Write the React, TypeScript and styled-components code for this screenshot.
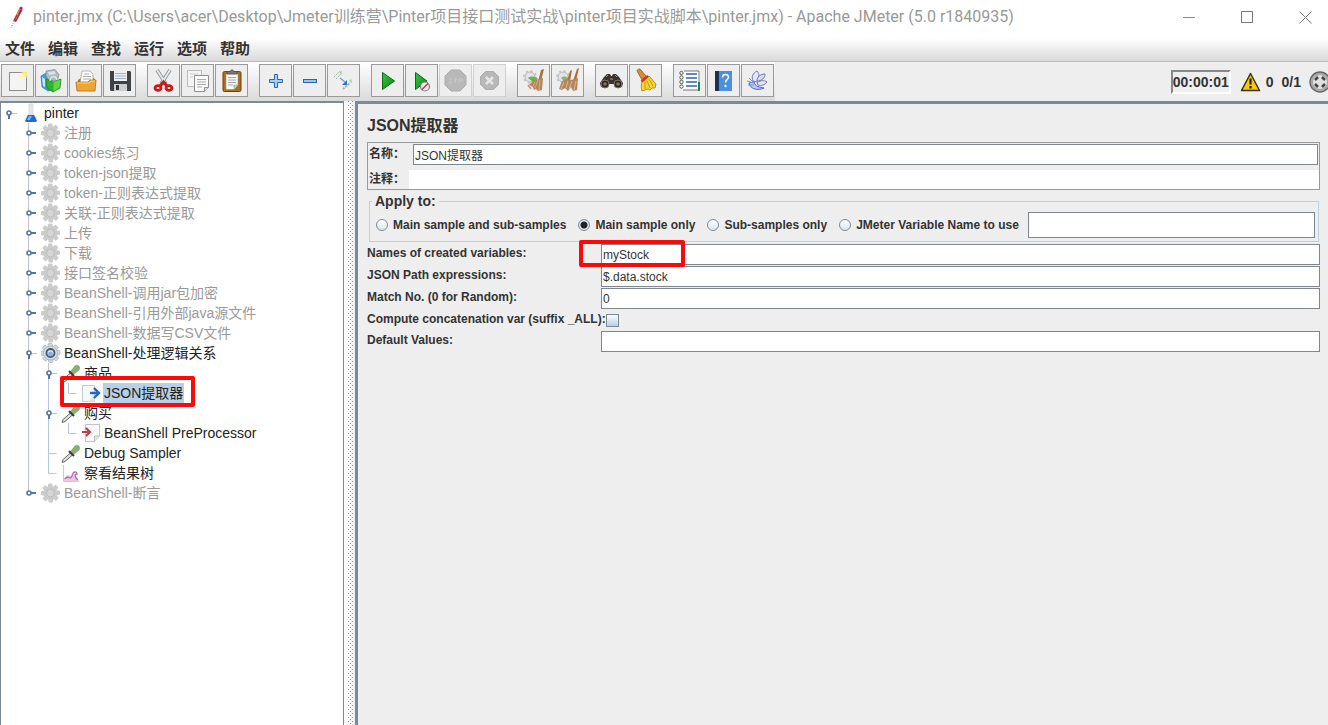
import React from "react";
import styled, { createGlobalStyle, css } from "styled-components";

const sans = `"Liberation Sans", Arial, "Noto Sans CJK SC", sans-serif`;

const GlobalStyle = createGlobalStyle`
  * { box-sizing: border-box; }
  body { margin: 0; background: #eeeeee; color: #333333; font-family: ${sans}; font-size: 12px; }
  button, input { font-family: inherit; font-size: inherit; color: inherit; margin: 0; }
`;

const Window = styled.div`
  display: flex;
  flex-direction: column;
  min-height: 100vh;
  overflow: hidden;
`;

/* ---------- title bar ---------- */

const TitleBar = styled.header`
  display: flex;
  align-items: center;
  height: 38px;
  padding: 0 3px 4px 8px;
  background: #ffffff;
`;

const Title = styled.h1`
  flex: 1;
  min-width: 0;
  margin: 0 0 0 7px;
  overflow: hidden;
  white-space: nowrap;
  font-family: Roboto, "Noto Sans CJK SC", sans-serif;
  font-size: 16px;
  line-height: 24px;
  font-weight: 400;
  color: #999999;
`;

const WindowButton = styled.button`
  display: flex;
  align-items: center;
  justify-content: center;
  width: 40px;
  height: 34px;
  margin-left: 18px;
  padding: 0;
  border: 0;
  background: none;
`;

/* ---------- menu ---------- */

const MenuBar = styled.nav`
  display: flex;
  gap: 13px;
  height: 24px;
  padding: 0 5px 2px;
  border-bottom: 1px solid #bbbbbb;
  background: linear-gradient(#ffffff, #dadada);
`;

const MenuItem = styled.button`
  padding: 0;
  border: 0;
  background: none;
  font-size: 15px;
  line-height: 20px;
  font-weight: 700;
`;

/* ---------- toolbar ---------- */

const ToolRow = styled.div`
  display: flex;
  align-items: stretch;
  justify-content: space-between;
  height: 39px;
  overflow: hidden;
`;

const ToolBar = styled.div`
  display: flex;
  gap: 11px;
  padding: 2px 1px 4px;
  background: linear-gradient(#ffffff, #dadada);
`;

const ToolGroup = styled.div`
  display: flex;
  gap: 1px;
`;

const ToolButton = styled.button`
  display: flex;
  align-items: center;
  justify-content: center;
  width: 33px;
  height: 33px;
  padding: 0;
  border: 1px solid #999999;
  background: #eeeeee;
  &:disabled { border-color: #d0d0d0; }
`;

const Status = styled.div`
  display: flex;
  align-items: center;
  margin-right: -3px;
  font-size: 14px;
  font-weight: 700;
`;

const Timer = styled.output`
  height: 24px;
  margin-right: 9px;
  border: 2px solid;
  border-color: #888888 #ffffff #ffffff #888888;
  line-height: 21px;
`;

const Count = styled.span`
  margin: 0 8px 0 5px;
  & + & { margin-left: 0; }
`;

/* ---------- main split ---------- */

const Split = styled.main`
  display: flex;
  flex: 1;
`;

const TreePane = styled.section`
  flex: 0 0 344px;
  border: 1px solid #7a8a99;
  border-top-width: 2px;
  border-bottom: 0;
  background: #ffffff;
`;

const Divider = styled.div`
  display: flex;
  flex: 0 0 11px;
  justify-content: flex-end;
  padding-right: 2px;
  background: linear-gradient(90deg, #ffffff, #eeeeee);
`;

const Grip = styled.div`
  width: 5px;
  background:
    linear-gradient(#888888, #888888) 0 0 / 1px 1px,
    conic-gradient(from 0deg at 1px 1px, transparent 270deg, #9a9a9a 270deg) 0 0 / 4px 4px,
    conic-gradient(from 0deg at 1px 1px, transparent 270deg, #9a9a9a 270deg) 2px 2px / 4px 4px;
  background-repeat: no-repeat, repeat, repeat;
`;

const Tree = styled.ul`
  margin: 0;
  padding: 0;
  list-style: none;
`;

const TreeItem = styled.li`
  position: relative;
  display: flex;
  align-items: center;
  height: 20px;
  font-size: 14px;
  line-height: 20px;
  white-space: nowrap;
`;

const Cell = styled.svg`
  flex: 0 0 20px;
  width: 20px;
  height: 20px;
`;

const Label = styled.span<{ $tone?: "off" | "on" | "selected" }>`
  margin-left: 2px;
  padding: 0 1px;
  color: ${(p) => (p.$tone === "off" ? "#999999" : "#222222")};
  ${(p) =>
    p.$tone === "selected" &&
    css`
      background: #b8cfe5;
    `}
`;

const markFrame = css`
  position: absolute;
  z-index: 1;
  border: 4px solid #fb0a0a;
  border-radius: 2px;
  pointer-events: none;
`;

const TreeMark = styled.span`
  ${markFrame}
  left: 59px;
  top: -7px;
  width: 135px;
  height: 31px;
`;

const FieldMark = styled.span`
  ${markFrame}
  left: -22px;
  top: -4px;
  width: 106px;
  height: 27px;
`;

/* ---------- editor ---------- */

const Editor = styled.section`
  flex: 1;
  min-width: 0;
  padding: 11px 8px 10px 9px;
  border-top: 3px solid #7a8a99;
  border-left: 3px solid #7a8a99;
  font-weight: 700;
`;

const EditorTitle = styled.h2`
  margin: 0 0 5px;
  font-size: 16px;
  line-height: 22px;
  font-weight: 700;
`;

const NamePanel = styled.div`
  border: 1px solid #999999;
`;

const NameRow = styled.div`
  display: flex;
  align-items: center;
  gap: 4px;
  padding: 1px;
  & + & { gap: 0; padding: 4px 0 0 1px; }
`;

const NameLabel = styled.label`
  flex: 0 0 40px;
  white-space: nowrap;
  line-height: 19px;
`;

const TextField = styled.input<{ $plain?: boolean; $tall?: boolean }>`
  display: block;
  flex: 1;
  width: 100%;
  min-width: 0;
  height: ${(p) => (p.$tall ? 26 : p.$plain ? 19 : 21)}px;
  padding: 0 1px;
  border: ${(p) => (p.$plain ? "0" : "1px solid #7f868d")};
  border-radius: 0;
  outline: 0;
  background: #ffffff;
  font-weight: 400;
`;

const Scope = styled.fieldset`
  min-width: 0;
  margin: 3px 1px 0 2px;
  padding: 3px 3px 3px 6px;
  border: 1px solid #b8cfe5;
`;

const ScopeLegend = styled.legend`
  margin-left: -4px;
  padding: 0 3px;
  font-size: 14px;
  line-height: 16px;
`;

const ScopeRow = styled.div`
  display: flex;
  align-items: center;
  gap: 12px;
`;

const Choice = styled.label`
  display: flex;
  align-items: center;
  gap: 5px;
  white-space: nowrap;
`;

const Radio = styled.input`
  appearance: none;
  width: 12px;
  height: 12px;
  border: 1px solid #7a8a99;
  border-radius: 50%;
  background: linear-gradient(#ffffff, #dbe6f1);
  &:checked { background: radial-gradient(circle, #222222 3px, #e4ecf4 4px); }
`;

const ScopeName = styled.div`
  display: flex;
  flex: 1;
  margin-left: -3px;
`;

const Fields = styled.div`
  display: grid;
  grid-template-columns: 234px 1fr;
  row-gap: 1px;
  margin-top: 2px;
`;

const FieldLabel = styled.label`
  white-space: nowrap;
  line-height: 18px;
`;

const FieldBox = styled.div`
  position: relative;
  min-height: 20px;
`;

const CheckBox = styled.input`
  display: block;
  appearance: none;
  width: 13px;
  height: 13px;
  margin: 4px 0 3px 5px;
  border: 1px solid #7a8a99;
  background: linear-gradient(#ffffff, #b8cfe5);
`;

/* ---------- toolbar drawings ---------- */

const art: Record<string, React.ReactNode> = {
  new: (
    <>
      <rect x="4.5" y="4.5" width="17" height="18" fill="#f4f4f2" stroke="#8c8c8c" />
      <circle cx="18" cy="8" r="4" fill="#fff9a0" opacity=".5" />
      <circle cx="20" cy="6" r="2.500" fill="#fff36a" opacity=".9" />
    </>
  ),
  templates: (
    <>
      <path d="M2 8l5-3 6 2v15l-4 1-6-4z" fill="#3c9fd6" stroke="#1c6fa3" strokeWidth=".6" />
      <path d="M7 3 16 1.500l4 5-2 7-9-2-2-4z" fill="#aebbc4" stroke="#7c8a92" strokeWidth=".7" />
      <path d="M9 4l6-1 2 3-7 1z" fill="#dbe3e8" />
      <path d="M3 9l3 2v8l-2-1z" fill="#c9ebfb" />
      <path d="M7 11l7 3 8-3-1 9-7 4-6-4z" fill="#2fb52c" stroke="#147c18" strokeWidth=".7" />
      <path d="M14.500 14l7-2.500-1 8-6 3.500z" fill="#5fd846" />
      <path d="M11 13c0-5 6-6 7-1" fill="none" stroke="#dff5df" strokeWidth="1.200" />
    </>
  ),
  open: (
    <>
      <path d="M5 12l3-2h13l1 2v10H5z" fill="#b8740f" />
      <path d="M9 3h8l3 3v9H7z" fill="#fff" stroke="#999" strokeWidth=".7" />
      <path d="M11 6h5M10 8.500h8M10 11h8" stroke="#aaa" />
      <path d="M3 14h12l2-2h6l-1 11H4z" fill="#eda636" stroke="#b06d0c" strokeWidth=".8" />
      <path d="M4 15h12l2-2h4" stroke="#ffd27c" />
    </>
  ),
  save: (
    <>
      <path d="M3 3h20l1 1v19H4l-1-1z" fill="#3f4245" />
      <rect x="7" y="3" width="13" height="10" fill="#eef1f3" />
      <path d="M8 5.500h11M8 8h11M8 10.500h11" stroke="#9db3c4" />
      <rect x="7" y="16" width="13" height="7" fill="#c9cdd0" />
      <rect x="9" y="17" width="3" height="5" fill="#333" />
    </>
  ),
  cut: (
    <>
      <path d="M6 2 15 16M19 2 10 16" stroke="#8a8f93" strokeWidth="3.600" />
      <path d="M6 2 15 16M19 2 10 16" stroke="#e5e8ea" strokeWidth="2" />
      <ellipse cx="7" cy="20" rx="3" ry="2.400" fill="none" stroke="#d01717" strokeWidth="2.800" />
      <ellipse cx="18" cy="20" rx="3" ry="2.400" fill="none" stroke="#d01717" strokeWidth="2.800" />
      <path d="M9 18l3.500-4 3.500 4" stroke="#d01717" strokeWidth="3" fill="none" />
    </>
  ),
  copy: (
    <>
      <path d="M2.500 2.500h14v16h-14z" fill="#f4f4f4" stroke="#bbb" />
      <path d="M5 6h8M5 9h3" stroke="#ccc" />
      <path d="M9.500 7.500h14v12l-4 4h-10z" fill="#fafafa" stroke="#8d8d8d" />
      <path d="M12 11.500h9M12 14h9M12 16.500h9M12 19h5" stroke="#a9a9a9" />
      <path d="M19.500 23.500v-4h4" fill="#ddd" stroke="#8d8d8d" />
    </>
  ),
  paste: (
    <>
      <rect x="4" y="3.500" width="18" height="20" rx="1.500" fill="#a8701d" stroke="#6b4510" />
      <path d="M7 6h12v11l-4 4.500H7z" fill="#fbfbf8" stroke="#8d8d8d" strokeWidth=".6" />
      <path d="M9 9.500h8M9 12h8M9 14.500h8M9 17h5" stroke="#a3a3a3" />
      <path d="M15 21v-4h4" fill="#ccc" stroke="#999" strokeWidth=".6" />
      <path d="M8 6V3.500h3L12 2h2l1 1.500h3V6z" fill="#777b72" stroke="#4c4f48" strokeWidth=".7" />
    </>
  ),
  plus: <path d="M11.500 6.500h3v5h5v3h-5v5h-3v-5h-5v-3h5z" fill="#a9cdf3" stroke="#2d66a8" />,
  minus: <rect x="6.500" y="11.500" width="13" height="3" fill="#9cc4ef" stroke="#2d66a8" />,
  toggle: (
    <>
      <path d="M3 9l6-6M5 11l6-6" stroke="#9fb0a4" strokeDasharray="2 1" />
      <path d="M8 4l3-1-1 3z" fill="#9ccf90" />
      <path d="M12 21l7-6" stroke="#9fb0a4" strokeWidth="2" strokeDasharray="2 1" />
      <path d="M18 13l3 2-1-4z" fill="#9ccf90" />
      <path d="M9 10l5 4" stroke="#6b9be0" strokeWidth="1.300" />
      <path d="M16 17v-5l-5 5z" fill="#2e74d4" />
    </>
  ),
  start: <path d="M7.500 4.500 19.500 13 7.500 21.500z" fill="url(#play)" stroke="#0b6b13" />,
  startNoPause: (
    <>
      <path d="M6.500 4.500 18 13 6.500 21.500z" fill="url(#play)" stroke="#0b6b13" />
      <circle cx="16" cy="18.500" r="4.500" fill="#e7ecf2" stroke="#77808a" strokeWidth="1.200" />
      <path d="M13 21.500l6-6" stroke="#e03434" strokeWidth="1.600" />
    </>
  ),
  stop: (
    <>
      <path d="M8 2h9l6 6v9l-6 6H8l-6-6V8z" fill="#b8b8b8" stroke="#adadad" />
      <path d="M6 11h3l-3 4h3M11 11h3M12.500 11v4M16 15v-4h3v2h-3" stroke="#cacaca" fill="none" />
    </>
  ),
  shutdown: (
    <>
      <path d="M8.500 3.500h8l5 5v8l-5 5h-8l-5-5v-8z" fill="#b8b8b8" stroke="#adadad" />
      <path d="M9 9l7 7M16 9l-7 7" stroke="#e6e6e6" strokeWidth="2.600" />
    </>
  ),
  clear: (
    <>
      <circle cx="9" cy="9" r="5" fill="#e4e4e4" stroke="#b4b4b4" />
      <circle cx="9" cy="9" r="6" stroke="#c4c4c4" strokeDasharray="2 2.700" strokeWidth="2" />
      <path d="M7 10c4-3 8-1 10 1l-5 3z" fill="#63b545" />
      <path d="M20 2l3-1-3 12-3 1z" fill="#a9713d" />
      <path d="M8 17l4-4 6-2 4-1-1 12-4 1-2-2-2 1-1-3z" fill="#b5865a" />
      <path d="M17 12l-3 8M19 12l-1 10M14 14l-2 4" stroke="#dcb78c" strokeWidth=".8" />
      <path d="M7 17l3 4" stroke="#d8858a" strokeWidth="1.500" />
    </>
  ),
  clearAll: (
    <>
      <circle cx="8" cy="9" r="5" fill="#e4e4e4" stroke="#b4b4b4" />
      <circle cx="8" cy="9" r="6" stroke="#c4c4c4" strokeDasharray="2 2.700" strokeWidth="2" />
      <path d="M6 10c3-3 6-1 8 1l-5 2z" fill="#86b56e" />
      <path d="M15 3l2-1-2 11h-3zM22 1l2-1-3 13h-3z" fill="#a9713d" />
      <path d="M4 21l3-8 5-2 4 1 7-2-1 12-4 1-2-4-3 4-3-3-3 2z" fill="#b0875f" />
      <path d="M9 14l-3 7M13 13l-2 7M17 13l-3 8M21 13l-2 9" stroke="#dcc09c" strokeWidth=".9" />
    </>
  ),
  search: (
    <>
      <path d="M5 9l3-3h3l1 2h1l1-2h3l3 3 4 6-1 4-5 1-3-4h-5l-3 4-5-1-1-4z" fill="#39322d" />
      <circle cx="6" cy="16" r="4" fill="#2b2622" stroke="#857464" />
      <circle cx="19" cy="16" r="4" fill="#2b2622" stroke="#857464" />
      <circle cx="6" cy="16" r="1.800" fill="#8a7460" />
      <circle cx="19" cy="16" r="1.800" fill="#8a7460" />
      <path d="M7 9l2-2M16 7l2 2M11 11h3" stroke="#a39a92" />
    </>
  ),
  broom: (
    <>
      <path d="M4 3c0-2 3-3 4-1l5 6-4 4z" fill="#d58a35" stroke="#8d5312" strokeWidth=".7" />
      <path d="M9 13l7-5 7 8-1 4h-3l-2 2-2-1-6 2c-1-3-1-7 0-10z" fill="#f8d52f" stroke="#a67d06" strokeWidth=".8" />
      <path d="M8.500 13.500 15 8" stroke="#d6312a" strokeWidth="2.600" />
      <path d="M12 14v7M14 13l3 7M16 11l4 7" stroke="#b88a0c" strokeWidth=".8" />
    </>
  ),
  functions: (
    <>
      <rect x="5" y="3" width="18" height="19" fill="#fff" />
      <path d="M7 3h15v19H6" stroke="#777" fill="none" />
      <path d="M9 6h11M9 10h11M9 14h11M9 18h11" stroke="#2f5fb8" strokeWidth="1.400" />
      <g fill="#ffffff" stroke="#444" strokeWidth=".9">
        <circle cx="4.500" cy="5" r="1.700" />
        <circle cx="4.500" cy="9.500" r="1.700" />
        <circle cx="4.500" cy="14" r="1.700" />
        <circle cx="4.500" cy="18.500" r="1.700" />
      </g>
      <path d="M21 14h2v9h-2z" fill="#168c48" />
    </>
  ),
  help: (
    <>
      <rect x="4" y="3" width="4" height="20" fill="#1d3050" />
      <rect x="8" y="3" width="13" height="20" fill="#4a90dc" />
      <path d="M11.500 9.500c0-4 6-4 6-.5 0 2.500-3 2.500-3 5.500" fill="none" stroke="#fff" strokeWidth="1.600" />
      <circle cx="14.500" cy="18" r="1.200" fill="#fff" />
    </>
  ),
  flower: (
    <>
      <path d="M8 13c-2-4 0-8 4-10 3 3 2 7 0 11z" fill="#e6e6f6" stroke="#7077b8" />
      <path d="M12 13c0-4 3-7 8-7 0 4-3 6-6 7z" fill="#d8d9f0" stroke="#7077b8" />
      <path d="M12 15c4-3 7-3 10-1-2 3-6 4-9 3z" fill="#e6e6f6" stroke="#7077b8" />
      <path d="M4 15c1 6 9 8 15 5-4-1-9-1-10-6z" fill="#c5c9f2" stroke="#4b62c4" />
      <path d="M2 13l7 2M4 10l5 5M3 17h6" stroke="#5a9ae8" />
    </>
  ),
};

const groups: { id: string; label: string; off?: boolean }[][] = [
  [{ id: "new", label: "新建" }, { id: "templates", label: "模板" }, { id: "open", label: "打开" }, { id: "save", label: "保存" }],
  [{ id: "cut", label: "剪切" }, { id: "copy", label: "复制" }, { id: "paste", label: "粘贴" }],
  [{ id: "plus", label: "展开" }, { id: "minus", label: "折叠" }, { id: "toggle", label: "切换" }],
  [
    { id: "start", label: "启动" },
    { id: "startNoPause", label: "不停顿开始" },
    { id: "stop", label: "停止", off: true },
    { id: "shutdown", label: "关闭", off: true },
  ],
  [{ id: "clear", label: "清除" }, { id: "clearAll", label: "清除全部" }],
  [{ id: "search", label: "查找" }, { id: "broom", label: "重置查找" }],
  [{ id: "functions", label: "函数助手" }, { id: "help", label: "帮助" }, { id: "flower", label: "Plugins" }],
];

/* ---------- tree drawings ---------- */

const gearTeeth = [0, 45, 90, 135, 180, 225, 270, 315];

const Gear = ({ on }: { on?: boolean }) => (
  <Cell viewBox="0 0 20 20">
    <g fill={on ? "#d5dbe1" : "#cccccc"} stroke={on ? "#98a2ac" : "none"} strokeWidth=".6">
      {gearTeeth.map((a) => (
        <rect key={a} x="7" y=".5" width="4.500" height="5" rx="1.200" transform={`rotate(${a} 9.500 10)`} />
      ))}
      <circle cx="9.500" cy="10" r="7" />
    </g>
    <circle cx="9.500" cy="10" r="4" fill={on ? "#dfe8f2" : "#d6d6d6"} stroke={on ? "#4a5564" : "#bdbdbd"} strokeWidth={on ? 1.8 : 1} />
    {on && <circle cx="9.500" cy="11" r="2.400" fill="#7fb0ea" />}
  </Cell>
);

const icons: Record<string, React.ReactNode> = {
  gear: <Gear />,
  gearOn: <Gear on />,
  flask: (
    <Cell viewBox="0 0 20 20">
      <path d="M8 1h4v9l3 5v3H5v-3l3-5z" fill="#e3e7eb" stroke="#d0d5da" strokeWidth=".6" />
      <path d="M7 12h6l3 6-1 1H5l-1-1z" fill="#2468d0" />
      <path d="M8 13h3l-2 4H6z" fill="#7fb2f0" />
    </Cell>
  ),
  pipette: (
    <Cell viewBox="0 0 20 20">
      <path d="M1 19.500l1-3 8-7 2 2-8 7z" fill="#d5e4da" stroke="#555b55" strokeWidth=".9" />
      <path d="M8 8l5 5" stroke="#3a3f3a" strokeWidth="2.200" />
      <path d="M10 8l4-5c2-2 6 0 4 4l-5 4z" fill="#86b272" stroke="#67935a" strokeWidth=".6" />
    </Cell>
  ),
  post: (
    <Cell viewBox="0 0 20 20">
      <path d="M1.500 2.500h12v16h-12z" fill="#f7f8fa" stroke="#b4bcc6" strokeWidth=".8" />
      <path d="M13.500 12l-6 6.500h6z" fill="#efe3c8" />
      <path d="M9 10h8M13 5l5 5-5 5" fill="none" stroke="#2468c4" strokeWidth="2.400" />
    </Cell>
  ),
  pre: (
    <Cell viewBox="0 0 20 20">
      <path d="M4.500 1.500h14V13l-5 5.500h-9z" fill="#fafafa" stroke="#b4b4b4" strokeWidth=".8" />
      <path d="M13.500 18.500V13h5" fill="#e4e4e4" stroke="#b4b4b4" strokeWidth=".8" />
      <path d="M1 9h8M5 5l4 4-4 4" fill="none" stroke="#b8404a" strokeWidth="2.200" />
    </Cell>
  ),
  results: (
    <Cell viewBox="0 0 20 20">
      <path d="M2.500 2v16.500H18" fill="none" stroke="#cccccc" />
      <path d="M3 18v-3l4-3 4 1 3-2 3 7z" fill="#f3c3e2" />
      <path d="M4 16c3-5 5 2 7-3 1-5 5-5 5-2-3 0-2 4 1 6" fill="none" stroke="#a070c8" strokeWidth="1.300" />
    </Cell>
  ),
};

type CellKind = "blank" | "line" | "closed" | "open" | "tee" | "end";

const Guide = ({ kind, first, last }: { kind: CellKind; first?: boolean; last?: boolean }) => (
  <Cell viewBox="0 0 20 20" aria-hidden="true">
    <g stroke="#b4c6e0" fill="none">
      {(kind === "line" || kind === "tee") && <path d="M7.500 0v20" />}
      {(kind === "closed" || kind === "open") && !first && <path d={last ? "M7.500 0v10" : "M7.500 0v20"} />}
      {kind === "tee" && <path d="M7.500 10.500h8" />}
      {kind === "end" && <path d="M7.500 0v10.500h8" />}
      {kind === "open" && <path d="M10 10.500h6" />}
    </g>
    {(kind === "closed" || kind === "open") && (
      <g stroke="#5673a8" fill="#ffffff" strokeWidth="2">
        <path d={kind === "closed" ? "M9 10h6" : "M8 11v5"} />
        <circle cx="8" cy="10" r="2" strokeWidth="1.600" />
      </g>
    )}
  </Cell>
);

interface Node {
  text: string;
  icon: string;
  guides: CellKind[];
  tone?: "off" | "on" | "selected";
  edge?: "first" | "last";
}

const off = (text: string, edge?: "last"): Node => ({ text, icon: "gear", guides: ["blank", "closed"], tone: "off", edge });

const nodes: Node[] = [
  { text: "pinter", icon: "flask", guides: ["open"], edge: "first" },
  off("注册"),
  off("cookies练习"),
  off("token-json提取"),
  off("token-正则表达式提取"),
  off("关联-正则表达式提取"),
  off("上传"),
  off("下载"),
  off("接口签名校验"),
  off("BeanShell-调用jar包加密"),
  off("BeanShell-引用外部java源文件"),
  off("BeanShell-数据写CSV文件"),
  { text: "BeanShell-处理逻辑关系", icon: "gearOn", guides: ["blank", "open"] },
  { text: "商品", icon: "pipette", guides: ["blank", "line", "open"] },
  { text: "JSON提取器", icon: "post", guides: ["blank", "line", "line", "end"], tone: "selected" },
  { text: "购买", icon: "pipette", guides: ["blank", "line", "open"] },
  { text: "BeanShell PreProcessor", icon: "pre", guides: ["blank", "line", "line", "end"] },
  { text: "Debug Sampler", icon: "pipette", guides: ["blank", "line", "tee"] },
  { text: "察看结果树", icon: "results", guides: ["blank", "line", "end"] },
  off("BeanShell-断言", "last"),
];

const scopes = ["Main sample and sub-samples", "Main sample only", "Sub-samples only", "JMeter Variable Name to use"];

export default function App() {
  return (
    <Window>
      <GlobalStyle />
      <TitleBar>
        <svg width="18" height="24" viewBox="0 0 18 24">
          <path d="M12 2c3-1 3 1 2 4L8 17l-3-1z" fill="#c6263a" />
          <path d="M12 4 9 10M11 9l-3 6" stroke="#e9883a" strokeWidth="1.500" />
          <path d="M13 5 8 16" stroke="#6b2a72" />
          <path d="M5 18l-1 4M4 20l-1 3" stroke="#aaa" strokeDasharray="1 1" />
        </svg>
        <Title>
          pinter.jmx (C:\Users\acer\Desktop\Jmeter训练营\Pinter项目接口测试实战\pinter项目实战脚本\pinter.jmx) - Apache JMeter (5.0 r1840935)
        </Title>
        <WindowButton aria-label="Minimize">
          <svg width="13" height="13" fill="none" stroke="#888"><path d="M0 6.500h12" /></svg>
        </WindowButton>
        <WindowButton aria-label="Maximize">
          <svg width="13" height="13" fill="none" stroke="#777"><path d="M.5.5h11v11H.5z" /></svg>
        </WindowButton>
        <WindowButton aria-label="Close">
          <svg width="13" height="13" fill="none" stroke="#777"><path d="M.5.5l12 12M12.500.5l-12 12" /></svg>
        </WindowButton>
      </TitleBar>

      <MenuBar>
        {["文件", "编辑", "查找", "运行", "选项", "帮助"].map((m) => (
          <MenuItem key={m}>{m}</MenuItem>
        ))}
      </MenuBar>

      <ToolRow>
        <ToolBar>
          {groups.map((group) => (
            <ToolGroup key={group[0].id}>
              {group.map((tool) => (
                <ToolButton key={tool.id} aria-label={tool.label} disabled={tool.off}>
                  <svg width="25" height="25" viewBox="0 0 25 25" fill="none">
                    <defs>
                      <linearGradient id="play" x1="0" y1="0" x2="1" y2="1">
                        <stop offset="0" stopColor="#3fc34a" />
                        <stop offset="1" stopColor="#07860f" />
                      </linearGradient>
                    </defs>
                    {art[tool.id]}
                  </svg>
                </ToolButton>
              ))}
            </ToolGroup>
          ))}
        </ToolBar>
        <Status>
          <Timer>00:00:01</Timer>
          <svg width="21" height="20" viewBox="0 0 21 20">
            <path d="M10.500 1.500 19.500 18.500h-18z" fill="#f7c90c" stroke="#3b3200" strokeWidth="1.500" strokeLinejoin="round" />
            <path d="M10.500 6.500v6M10.500 14v2.500" stroke="#222" strokeWidth="2.200" />
          </svg>
          <Count>0</Count>
          <Count>0/1</Count>
          <svg width="22" height="22" viewBox="0 0 22 22">
            <circle cx="11" cy="11" r="10" fill="#a9a9a9" stroke="#666" strokeWidth="1.400" />
            <circle cx="11" cy="11" r="7" fill="#e0e0e0" />
            <path d="M6 9l3-3M13 6l3 3M16 13l-3 3M9 16l-3-3" stroke="#444" strokeWidth="2.600" />
          </svg>
        </Status>
      </ToolRow>

      <Split>
        <TreePane>
          <Tree>
            {nodes.map((n) => (
              <TreeItem key={n.text}>
                {n.guides.map((g, i) => (
                  <Guide key={i} kind={g} first={n.edge === "first"} last={n.edge === "last"} />
                ))}
                {icons[n.icon]}
                <Label $tone={n.tone}>{n.text}</Label>
                {n.tone === "selected" && <TreeMark />}
              </TreeItem>
            ))}
          </Tree>
        </TreePane>
        <Divider>
          <Grip />
        </Divider>
        <Editor>
          <EditorTitle>JSON提取器</EditorTitle>
          <NamePanel>
            <NameRow>
              <NameLabel htmlFor="name">名称：</NameLabel>
              <TextField id="name" defaultValue="JSON提取器" />
            </NameRow>
            <NameRow>
              <NameLabel htmlFor="comment">注释：</NameLabel>
              <TextField id="comment" $plain />
            </NameRow>
          </NamePanel>
          <Scope>
            <ScopeLegend>Apply to:</ScopeLegend>
            <ScopeRow>
              {scopes.map((s, i) => (
                <Choice key={s}>
                  <Radio type="radio" name="scope" defaultChecked={i === 1} />
                  {s}
                </Choice>
              ))}
              <ScopeName>
                <TextField $tall aria-label="JMeter Variable Name" />
              </ScopeName>
            </ScopeRow>
          </Scope>
          <Fields>
            <FieldLabel htmlFor="names">Names of created variables:</FieldLabel>
            <FieldBox>
              <TextField id="names" defaultValue="myStock" />
              <FieldMark />
            </FieldBox>
            <FieldLabel htmlFor="paths">JSON Path expressions:</FieldLabel>
            <FieldBox>
              <TextField id="paths" defaultValue="$.data.stock" />
            </FieldBox>
            <FieldLabel htmlFor="match">Match No. (0 for Random):</FieldLabel>
            <FieldBox>
              <TextField id="match" defaultValue="0" />
            </FieldBox>
            <FieldLabel htmlFor="concat">Compute concatenation var (suffix _ALL):</FieldLabel>
            <FieldBox>
              <CheckBox id="concat" type="checkbox" />
            </FieldBox>
            <FieldLabel htmlFor="defaults">Default Values:</FieldLabel>
            <FieldBox>
              <TextField id="defaults" />
            </FieldBox>
          </Fields>
        </Editor>
      </Split>
    </Window>
  );
}
